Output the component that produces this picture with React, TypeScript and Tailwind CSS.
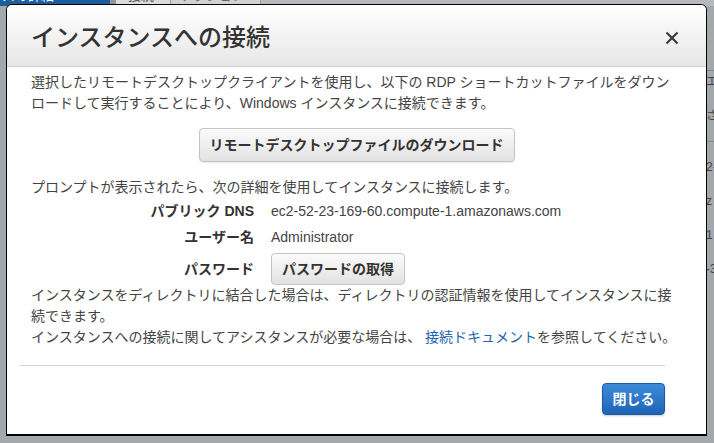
import { ReactNode } from 'react';

const font = { fontFamily: '"Liberation Sans", "Noto Sans CJK JP", sans-serif' };

const Row = ({ label, children, className = '' }: { label: string; children: ReactNode; className?: string }) => (
  <div className={`flex items-center ${className}`}>
    <div className="w-[223px] text-right font-bold text-[#333]">{label}</div>
    <div className="ml-[17px] text-[#444]">{children}</div>
  </div>
);

const App = () => {
  return (
    <div className="relative w-[714px] h-[443px] overflow-hidden bg-[#a3a8ad]" style={font}>
      {/* page behind the modal */}
      <div className="flex h-[20px] -mt-[14px] text-[13px] leading-[20px]">
        <div className="w-[110px] bg-[#1d5d9b] text-white pl-[2px]">スの詳細 ▾</div>
        <div className="w-[6px] bg-[#8f959b]" />
        <div className="w-[55px] bg-[#d9dcdf] text-[#444] pl-[12px] border-r border-[#999]">接続</div>
        <div className="w-[90px] bg-[#d0d3d6] text-[#666] pl-[10px] border-r border-[#999]">アクション</div>
        <div className="flex-1 bg-[#b6babe]" />
      </div>
      <div className="absolute right-0 top-[70px] w-[8px] flex flex-col gap-[16px] text-[12px] text-[#444]">
        <div className="border-t border-[#888] pt-[2px]">エ</div>
        <div>さ</div>
        <div className="border-t border-[#888]" />
        <div>2-</div>
        <div>z</div>
        <div>1</div>
        <div>-3</div>
      </div>

      {/* modal */}
      <div className="absolute left-[6px] top-[4px] w-[701px] h-[432px] bg-white border border-black border-b-2 rounded-t-[6px] overflow-hidden text-[14px] leading-[21px] text-[#333]">
        <div className="h-[62px] flex items-center justify-between px-[24px] border-b border-[#cfcfcf] bg-gradient-to-b from-white to-[#e7e7e7]">
          <h1 className="text-[24px] font-medium text-[#333] pt-[3px]">インスタンスへの接続</h1>
          <svg width="14" height="14" viewBox="0 0 14 14" className="mr-[3px] mt-[5px]">
            <path d="M1.5 1.5 L12.5 12.5 M12.5 1.5 L1.5 12.5" stroke="#3a3a3a" strokeWidth="2.2" />
          </svg>
        </div>

        <div className="px-[24px] pt-[5px]">
          <p className="text-[#444]">
            選択したリモートデスクトップクライアントを使用し、以下の RDP ショートカットファイルをダウンロードして実行することにより、Windows インスタンスに接続できます。
          </p>
          <div className="flex justify-center mt-[14px]">
            <button className="h-[34px] px-[10px] rounded-[4px] border border-[#c4c4c4] bg-gradient-to-b from-[#fbfbfb] to-[#e2e2e2] font-bold text-[#333] shadow-[0_1px_1px_rgba(0,0,0,0.08)]">
              リモートデスクトップファイルのダウンロード
            </button>
          </div>
          <p className="mt-[15px] text-[#444]">プロンプトが表示されたら、次の詳細を使用してインスタンスに接続します。</p>
          <Row label="パブリック DNS" className="h-[26px]">ec2-52-23-169-60.compute-1.amazonaws.com</Row>
          <Row label="ユーザー名" className="h-[26px]">Administrator</Row>
          <Row label="パスワード" className="h-[35px] pt-[3px]">
            <button className="h-[32px] px-[10px] rounded-[4px] border border-[#c4c4c4] bg-gradient-to-b from-[#fbfbfb] to-[#e2e2e2] font-bold text-[#333]">
              パスワードの取得
            </button>
          </Row>
          <p className="text-[#444]">
            インスタンスをディレクトリに結合した場合は、ディレクトリの認証情報を使用してインスタンスに接続できます。
          </p>
          <p className="text-[#444]">
            インスタンスへの接続に関してアシスタンスが必要な場合は、 <span className="text-[#1f64b0]">接続ドキュメント</span>を参照してください。
          </p>
        </div>

        <div className="mx-[13px] mt-[17px] mr-[41px] border-t border-[#d6d6d6]" />
        <div className="flex justify-end pr-[41px] pt-[17px]">
          <button className="h-[32px] w-[63px] rounded-[4px] border border-[#1b5aa5] bg-gradient-to-b from-[#3d8bd8] to-[#1f64b6] text-white font-bold shadow-[0_1px_2px_rgba(0,0,0,0.2)]">
            閉じる
          </button>
        </div>
      </div>
    </div>
  );
};

export default App;
